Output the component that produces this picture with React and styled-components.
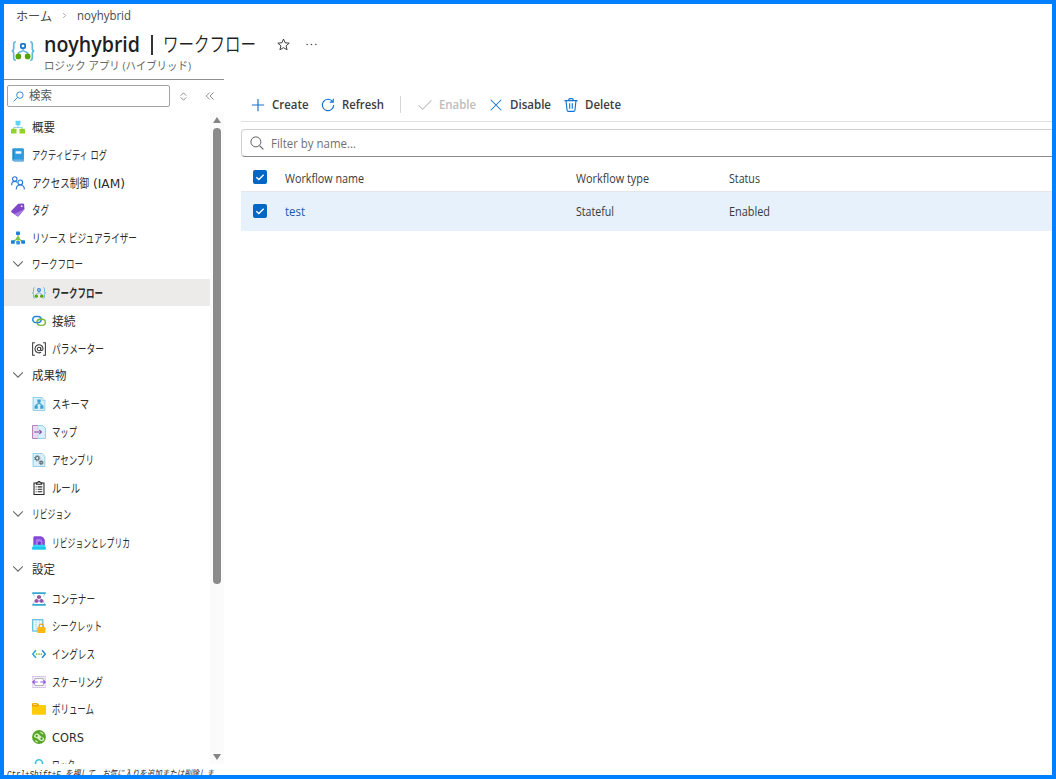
import { useLayoutEffect, useRef } from 'react'
import styled, { createGlobalStyle } from 'styled-components'

const latin = "'Open Sans', 'Noto Sans CJK JP', sans-serif"
const kana = "'DejaVu Sans', 'Noto Sans CJK JP', sans-serif"

const GlobalStyle = createGlobalStyle`
  * { box-sizing: border-box; }
  body { margin: 0; background: #fff; }
`

const Page = styled.div`
  display: flex;
  flex-direction: column;
  width: 1056px;
  height: 779px;
  border: 4px solid #0080ff;
  overflow: hidden;
  background: #fff;
  color: #2c2c2c;
  font-family: ${latin};
  font-size: 12px;
`

const FitBox = styled.span`
  display: inline-block;
  flex: none;
  width: ${({ $w }) => $w}px;
  white-space: nowrap;
`

const FitInner = styled.span`
  display: inline-block;
  transform-origin: 0 50%;
`

// Label condensed or widened to a fixed width
function Fit({ w, children }) {
  const ref = useRef(null)
  useLayoutEffect(() => {
    const fit = () => {
      const el = ref.current
      if (el && el.offsetWidth) {
        el.style.transform = 'none'
        el.style.transform = `scaleX(${w / el.getBoundingClientRect().width})`
      }
    }
    fit()
    document.fonts.ready.then(fit)
  }, [w])
  return <FitBox $w={w}><FitInner ref={ref}>{children}</FitInner></FitBox>
}

const Svg = styled.svg`
  display: block;
  flex: none;
  width: ${({ $s }) => $s || 14}px;
  height: ${({ $s }) => $s || 14}px;
  fill: none;
`

/* ---------- icons ---------- */

const icons = {
  workflow: (
    <>
      <path d="M3.2 1.800C2 1.800 1.800 2.500 1.800 3.600v2.700c0 1-.4 1.600-1.300 1.700.9.1 1.300.7 1.300 1.700v2.700c0 1.100.2 1.800 1.400 1.800M12.800 1.800c1.200 0 1.400.7 1.400 1.800v2.700c0 1 .4 1.600 1.300 1.700-.9.1-1.300.7-1.300 1.700v2.700c0 1.100-.2 1.800-1.400 1.800" stroke="#5cb8dc" strokeWidth="1.100" />
      <path d="M8 5.500v2.300M5 11V9.200L8 7.700l3 1.500V11" stroke="#66b9e0" strokeWidth="1" />
      <rect x="6.600" y="3.200" width="2.800" height="2.900" rx=".6" stroke="#1878d0" strokeWidth="1.200" />
      <circle cx="4.900" cy="11.600" r="1.900" fill="#57a300" />
      <circle cx="11.100" cy="11.600" r="1.900" fill="#57a300" />
    </>
  ),
  overview: (
    <>
      <path d="M8 5v4.500M3 11V8.500h10V11" stroke="#7fc8e8" strokeWidth="1" />
      <rect x="5.300" y=".8" width="5.400" height="5.200" rx=".5" fill="#5fd3f3" />
      <rect x="0" y="10" width="6.300" height="5.500" rx=".5" fill="#92d423" />
      <rect x="9.700" y="10" width="6.300" height="5.500" rx=".5" fill="#92d423" />
    </>
  ),
  log: (
    <>
      <path d="M2 .5h11.500a1 1 0 0 1 1 1v13a1 1 0 0 1-1 1H3.500A2 2 0 0 1 1.500 13.500V1z" fill="#1f88d0" />
      <path d="M2.500 14.300h11v-1h-11z" fill="#b6def7" />
      <path d="M3.500.5h10a1 1 0 0 1 1 1V12.500H3.500z" fill="#2f9be0" />
      <rect x="5.200" y="3.700" width="6.600" height="3" rx=".4" fill="#f2faff" />
    </>
  ),
  iam: (
    <g stroke="#2678d4" strokeWidth="1.300">
      <circle cx="4.300" cy="3.400" r="2.600" />
      <path d="M.7 10.500c0-2.500 1.500-4.300 3.700-4.300 1 0 1.900.4 2.500 1" />
      <circle cx="10.600" cy="7.300" r="2.700" />
      <path d="M6 15.300c0-3 1.900-5 4.600-5s4.700 2 4.700 5" />
    </g>
  ),
  tag: (
    <>
      <path d="M8.200.9 14 .7c.5 0 .8.300.9.800l.6 5.300-6.600 8c-.5.6-1.200.7-1.800.3L.7 10.600c-.6-.5-.7-1.100-.3-1.700z" fill="#8048c8" />
      <path d="m15.500 6.800-6.600 8c-.5.6-1.200.7-1.800.3l-3.600-2.500z" fill="#a77be0" />
      <circle cx="12.200" cy="3.600" r="1.100" fill="#eadcff" />
    </>
  ),
  visualizer: (
    <>
      <path d="M8 4v9M8 6.500c-1 3-3 4.500-5.500 5.500M8 6.500c1 3 3 4.500 5.500 5.500" stroke="#80c342" strokeWidth="1.400" />
      <rect x="5.800" y=".5" width="4.400" height="4.200" rx=".6" fill="#1f7fd6" />
      <circle cx="8" cy="8" r="1.800" fill="#80c342" />
      <rect x="0" y="10.500" width="4.300" height="4.200" rx=".6" fill="#1f7fd6" />
      <rect x="6" y="11.400" width="4.200" height="4.100" rx=".6" fill="#2f95e8" />
      <rect x="11.700" y="10.500" width="4.300" height="4.200" rx=".6" fill="#1f7fd6" />
    </>
  ),
  connection: (
    <>
      <rect x="5.800" y="6" width="9.500" height="7" rx="3.500" stroke="#7dbb3c" strokeWidth="1.600" />
      <rect x=".8" y="2.800" width="9.700" height="7" rx="3.500" stroke="#2586db" strokeWidth="1.600" />
      <path d="M5.900 9.500A3.500 3.500 0 0 1 9.300 6h2.500" stroke="#7dbb3c" strokeWidth="1.600" />
    </>
  ),
  param: (
    <g stroke="#3c3c3c" strokeWidth="1.200">
      <path d="M3.300.8H.7v14.400h2.600M12.700.8h2.600v14.400h-2.600" />
      <circle cx="8" cy="8" r="2" />
      <path d="M10 6v2.500c0 1.900 2.600 1.600 2.600-.7a4.600 4.600 0 1 0-2.300 4" />
    </g>
  ),
  schema: (
    <>
      <path d="M1.200.6h10.300L14.700 3.800v11.600H1.200z" fill="#d9f0fa" stroke="#7cc4e2" strokeWidth=".9" />
      <path d="M11.500.6v3.200h3.200" fill="#fff" stroke="#7cc4e2" strokeWidth=".8" />
      <path d="M8 5v3M4.700 11V9.200L8 7l3.300 2.200V11" stroke="#4aa7d0" strokeWidth="1.500" />
      <path d="M6.100 2.800h3.800v3.400H6.100zM2.900 9.700h3.700v3.600H2.900zM9.400 9.700h3.700v3.600H9.400z" fill="#3f9fce" />
    </>
  ),
  map: (
    <>
      <path d="M6.500.6h5.800L15.400 3.800v11.600H6.500z" fill="#d9f0fa" stroke="#7cc4e2" strokeWidth=".9" />
      <path d="M6.500.6H.6v14.800h5.900" fill="#ead9ee" stroke="#9b65ab" strokeWidth=".9" />
      <path d="M2.500 8h8M8.400 5.600 10.800 8l-2.400 2.400" stroke="#8a4d9e" strokeWidth="1.200" />
    </>
  ),
  assembly: (
    <>
      <path d="M1.200.6h10.300L14.700 3.800v11.600H1.200z" fill="#d9f0fa" stroke="#7cc4e2" strokeWidth=".9" />
      <circle cx="6" cy="6" r="2" stroke="#5b696f" strokeWidth="1.400" />
      <circle cx="6" cy="6" r="3.100" stroke="#5b696f" strokeWidth="1.100" strokeDasharray="1.200 1.200" />
      <circle cx="10.500" cy="11" r="1.400" stroke="#5b696f" strokeWidth="1.300" />
      <circle cx="10.500" cy="11" r="2.400" stroke="#5b696f" strokeWidth="1" strokeDasharray="1 .9" />
    </>
  ),
  rule: (
    <g stroke="#252525" strokeWidth="1.200">
      <path d="M5 2.200H2.300v13.200h11.400V2.200H11" />
      <path d="M5 3.800V1.900h1.700C6.800.9 7.300.5 8 .5s1.200.4 1.300 1.400H11v1.900z" />
      <path d="M4.200 6.700h1M6.500 6.700h5.200M4.200 9.500h1M6.500 9.500h5.200M4.200 12.300h1M6.500 12.300h5.200" />
    </g>
  ),
  revision: (
    <>
      <path d="M1.500 11V2c0-1 .6-1.700 1.600-1.700h6c3.300 0 5.600 2.500 5.600 5.700v5z" fill="#8548d8" />
      <path d="M4.500 11V5c0-1 .6-1.500 1.500-1.500h2.700c2 0 3.300 1.500 3.300 3.300V11z" fill="#a878ec" />
      <path d="M6.800 11V6.500h1.700c1 0 1.600.6 1.600 1.500v3z" fill="#6a35c0" />
      <path d="M1.500 10h13.200l1.100 4c.2.900-.3 1.500-1.200 1.500H1.400c-.9 0-1.400-.6-1.200-1.500z" fill="#35d9f5" />
      <path d="M.6 12.700h14.800l.4 1.300c.2.900-.3 1.500-1.200 1.500H1.400c-.9 0-1.400-.6-1.200-1.500z" fill="#20c4ea" />
    </>
  ),
  container: (
    <>
      <path d="M.3 1.300h15.400M.3 14.700h15.400" stroke="#35a9cf" strokeWidth="1.800" />
      <path d="M1.700 2.200c0 1.700.5 2 1.500 2.500M14.300 2.200c0 1.700-.5 2-1.500 2.500M1.700 13.800c0-1.700.5-2 1.500-2.500M14.300 13.800c0-1.700-.5-2-1.500-2.500" stroke="#6dc3df" strokeWidth="1" />
      <path d="m8 3.300 2.300 1.200V7L8 8.100 5.700 7V4.500zM5.200 7.800l2.300 1.200v2.500l-2.300 1.100-2.300-1.100V9zM10.800 7.800l2.300 1.200v2.500l-2.300 1.100-2.300-1.100V9z" fill="#9457a8" />
    </>
  ),
  secret: (
    <>
      <rect x=".8" y=".8" width="11.600" height="13" fill="#e6f6fc" stroke="#4eb4d8" strokeWidth="1.200" />
      <path d="M4.600 1v12.600M8.500 1v12.600" stroke="#8fd0e6" strokeWidth=".8" strokeDasharray="1.500 .8" />
      <path d="M8.300 10V8.300a2.400 2.400 0 0 1 4.800 0V10" stroke="#f3a90c" strokeWidth="1.400" />
      <rect x="6" y="9.200" width="9.400" height="6.700" rx=".8" fill="#fcb813" />
    </>
  ),
  ingress: (
    <>
      <path d="M4.500 3.700.8 8l3.700 4.300" stroke="#2aa2dd" strokeWidth="1.700" />
      <path d="m11.500 3.700 3.700 4.300-3.700 4.300" stroke="#1e87d6" strokeWidth="1.700" />
      <circle cx="5.300" cy="8" r="1" fill="#78be30" />
      <circle cx="8" cy="8" r="1" fill="#78be30" />
      <circle cx="10.700" cy="8" r="1" fill="#78be30" />
    </>
  ),
  scaling: (
    <>
      <path d="M.5 1.700h15M.5 14.300h15M1 2.500v11M15 2.500v11" stroke="#b795dc" strokeWidth="1" strokeDasharray="1.500 .8" />
      <path d="M3.300 5.500V3.800h9.400v1.700M3.300 10.500v1.700h9.400v-1.700" stroke="#999" strokeWidth="1" />
      <path d="M.8 8h5.700M9.500 8h5.700M3 5.900.9 8 3 10.100M13 5.900 15.100 8 13 10.100" stroke="#9350dc" strokeWidth="1.300" />
    </>
  ),
  volume: (
    <>
      <path d="M0 2.500c0-.6.4-1 1-1h5.500l1.500 2H15c.6 0 1 .4 1 1V13.500c0 .6-.4 1-1 1H1c-.6 0-1-.4-1-1z" fill="#ffca08" />
      <path d="M0 2.500c0-.6.4-1 1-1h5.500l1.500 2L6.500 5H0z" fill="#e9a500" />
      <path d="M1.500 2.800h4" stroke="#fff1bd" strokeWidth=".8" />
    </>
  ),
  cors: (
    <>
      <circle cx="8" cy="8" r="7.900" fill="#5aa62c" />
      <path d="M2.200 7c1-3 3.300-3.500 4.700-2.600 2 1.200 2.200 2.700 4.500 3.500 1.500.5 2.700 1.500 2.700 2.900-.9 1.800-3.300 2.400-4.700 1.400-2-1.200-2.400-2.600-4.400-3.200C3.600 8.600 2.500 8.400 2.200 7z" fill="#d8f0bd" />
      <circle cx="5.300" cy="6.600" r="1.300" fill="#4b9622" />
      <circle cx="10.900" cy="10" r="1.300" fill="#4b9622" />
      <path d="M9.500 2.800c1.500.2 2.600 1 3.300 2M3.800 12c.7.9 1.700 1.400 2.800 1.600" stroke="#c8e8a8" strokeWidth="1.400" />
    </>
  ),
  lock: (
    <>
      <path d="M4 9V6a4 4 0 0 1 8 0v3" stroke="#32c4ea" strokeWidth="1.900" />
      <rect x="2" y="9" width="12" height="7" rx="1" fill="#32c4ea" />
    </>
  ),
  plus: <path d="M8 1v14M1 8h14" stroke="#1172d0" strokeWidth="1.300" />,
  refresh: (
    <path d="M13.300 4.200A6.500 6.500 0 1 0 14.500 8M14 .8v3.900h-4" stroke="#1172d0" strokeWidth="1.300" />
  ),
  check: <path d="m.8 8.500 4.400 4.400L15.300 2.800" stroke="#bdbdbd" strokeWidth="1.200" />,
  cross: <path d="m2 2 12 12M14 2 2 14" stroke="#1172d0" strokeWidth="1.200" />,
  trash: (
    <path d="M.5 3h15M5.500 3V2c0-.8.5-1.300 1.300-1.300h2.400c.8 0 1.300.5 1.300 1.300v1M2.300 3l1.200 11c.1.900.6 1.300 1.400 1.300h6.200c.8 0 1.300-.4 1.400-1.300l1.200-11M6.500 6v6.300M9.500 6v6.300" stroke="#1172d0" strokeWidth="1.300" />
  ),
  search: (
    <>
      <circle cx="6.700" cy="6.700" r="5.700" stroke="#5c5c5c" strokeWidth="1.100" />
      <path d="m10.900 10.900 4.400 4.400" stroke="#5c5c5c" strokeWidth="1.200" />
    </>
  ),
  lookup: (
    <>
      <circle cx="10" cy="6" r="4.700" stroke="#2f86d6" strokeWidth="1.400" />
      <path d="M6.600 9.400.8 15.200" stroke="#2f86d6" strokeWidth="1.400" />
    </>
  ),
  chevron: <path d="m2.500 5 5.500 5.500L13.500 5" stroke="#666" strokeWidth="1.200" />,
  crumb: <path d="m5 2.500 5.500 5.500L5 13.500" stroke="#888" strokeWidth="1.700" />,
  star: (
    <path d="m8 1.300 2 4.600 5 .4-3.800 3.300 1.200 4.900L8 11.900l-4.400 2.600 1.200-4.900L1 6.300l5-.4z" stroke="#3a3a3a" strokeWidth="1.200" />
  ),
  more: (
    <g fill="#555">
      <circle cx="2.700" cy="8" r="1" />
      <circle cx="8" cy="8" r="1" />
      <circle cx="13.300" cy="8" r="1" />
    </g>
  ),
  sort: <path d="M3 6.500 8 1.500l5 5M3 9.500l5 5 5-5" stroke="#777" strokeWidth="1.500" />,
  collapse: <path d="M7.500 2.500 2 8l5.500 5.500M13.500 2.500 8 8l5.500 5.500" stroke="#777" strokeWidth="1.300" />,
  tick: <path d="m3.800 8.200 2.900 2.700 5.500-5.500" stroke="#fff" strokeWidth="1.500" />,
}

function Icon({ name, size }) {
  return <Svg $s={size} viewBox="0 0 16 16">{icons[name]}</Svg>
}

/* ---------- header ---------- */

const Header = styled.header`
  flex: none;
  height: 75px;
`

const Breadcrumb = styled.nav`
  display: flex;
  align-items: center;
  height: 23px;
  padding-left: 12px;
  color: #4a4a4a;
`

const CrumbGap = styled.span`
  display: flex;
  padding: 0 9px;
`

const TitleRow = styled.div`
  display: flex;
  align-items: flex-start;
  height: 52px;
  padding-left: 7px;
`

const Logo = styled.div`
  margin: 12px 9px 0 0;
`

const Titles = styled.div`
  display: flex;
  flex-direction: column;
`

const Title = styled.h1`
  display: flex;
  align-items: center;
  height: 34px;
  margin: 0;
  color: #1f1f1f;
  font-size: 21px;
  font-weight: 600;
  line-height: 34px;
`

const Bar = styled.span`
  width: 1.5px;
  height: 20px;
  margin: 1px 10.5px 0 11px;
  background: #333;
`

const TitleThin = styled.span`
  margin-bottom: -1px;
  font-weight: 350;
  font-size: 20px;
`

const Subtitle = styled.div`
  height: 16px;
  margin-top: -3px;
  color: #666;
  font-size: 11px;
  line-height: 16px;
`

const TitleActions = styled.div`
  display: flex;
  align-items: center;
  gap: 15px;
  height: 35px;
  margin-left: 20.5px;
`

/* ---------- sidebar ---------- */

const Body = styled.div`
  display: flex;
  flex: 1;
  min-height: 0;
`

const Sidebar = styled.aside`
  display: flex;
  flex-direction: column;
  width: 220px;
  border-top: 1px solid #8f8f8f;
  font-family: ${kana};
`

const SearchRow = styled.div`
  display: flex;
  align-items: center;
  height: 33px;
  padding-left: 3px;
`

const SearchBox = styled.div`
  display: flex;
  align-items: center;
  gap: 5px;
  width: 163px;
  height: 22px;
  padding-left: 5px;
  border: 1px solid #a3a3a3;
  border-radius: 2px;
  color: #555;
  line-height: 16px;
`

const SearchTools = styled.div`
  display: flex;
  gap: 17px;
  align-items: center;
  margin-left: 9px;
`

const Scroller = styled.div`
  display: flex;
  flex: none;
  height: 652px;
  overflow: hidden;
`

const Menu = styled.ul`
  width: 206px;
  margin: 0;
  padding: 0;
  list-style: none;
`

const Item = styled.li`
  display: flex;
  align-items: center;
  gap: 6.5px;
  height: 27.74px;
  padding-top: ${({ $level }) => ($level === 'group' ? 0 : 2)}px;
  padding-left: ${({ $level }) => ($level === 'child' ? 27.5 : 7)}px;
  padding-bottom: ${({ $level }) => ($level === 'group' ? 1 : 0)}px;
  background: ${({ $active }) => ($active ? '#ecebea' : 'transparent')};
  font-weight: ${({ $active }) => ($active ? 700 : 400)};
  line-height: 20px;
`

const ItemLabel = styled.span`
  display: flex;
  gap: 4px;
  padding-top: 2px;
`

const Track = styled.div`
  display: flex;
  flex-direction: column;
  align-items: center;
  justify-content: space-between;
  width: 14px;
  padding: 5px 0 4px;
  background: #fbfbfb;
`

const Arrow = styled.i`
  width: 0;
  height: 0;
  border: 4px solid transparent;
  border-width: ${({ $up }) => ($up ? '0 4px 6px' : '6px 4px 0')};
  border-top-color: #858585;
  border-bottom-color: #858585;
`

const Thumb = styled.div`
  width: 8px;
  height: 456px;
  margin: 5px 0 auto;
  border-radius: 4px;
  background: #8b8b8b;
`

const Hint = styled.div`
  height: 11px;
  padding: 3.5px 0 0 2.5px;
  overflow: hidden;
  font-family: 'Liberation Mono', 'Noto Sans CJK JP', monospace;
  font-size: 9.5px;
  font-style: italic;
  line-height: 14px;
`

/* ---------- main ---------- */

const Main = styled.main`
  flex: 1;
  margin-left: 16.7px;
`

const Toolbar = styled.div`
  display: flex;
  align-items: center;
  gap: 12.8px;
  height: 43px;
  padding: 9px 0 0 10.5px;
  border-bottom: 1px solid #e0e0e0;
`

const Command = styled.span`
  display: flex;
  align-items: center;
  gap: 7px;
  color: ${({ $off }) => ($off ? '#bdbdbd' : '#3c3c3c')};
  font-weight: 600;
`

const Divider = styled.i`
  width: 1px;
  height: 17px;
  margin: 0 4px 0 3px;
  background: #d6d6d6;
`

const Filter = styled.div`
  display: flex;
  align-items: center;
  gap: 7px;
  height: 28px;
  margin-top: 7px;
  padding-left: 8px;
  border: 1px solid #d1d1d1;
  border-right: 0;
  border-bottom-color: #8a8a8a;
  border-radius: 4px 0 0 4px;
  color: #707070;
`

const Row = styled.div`
  display: grid;
  grid-template-columns: 32.7px 291px 152.5px 1fr;
  align-items: center;
  height: ${({ $head }) => ($head ? 35 : 39)}px;
  padding: ${({ $head }) => ($head ? '8px 0 0 12px' : '0 0 0 12px')};
  border-bottom: ${({ $head }) => ($head ? '1px solid #e3e6ea' : 'none')};
  background: ${({ $head }) => ($head ? '#fff' : '#e6f1fb')};
  color: #3a3a3a;
`

const Checkbox = styled.span`
  display: flex;
  align-items: center;
  justify-content: center;
  width: 14px;
  height: 14px;
  margin-bottom: 2px;
  border-radius: 2px;
  background: #0067c5;
`

const Link = styled.span`
  color: #145dab;
`

// [level, icon, [text, width] parts, active]
const menu = [
  ['top', 'overview', [['概要', 23]]],
  ['top', 'log', [['アクティビティ ログ', 75]]],
  ['top', 'iam', [['アクセス制御', 57], ['(IAM)', 32]]],
  ['top', 'tag', [['タグ', 17]]],
  ['top', 'visualizer', [['リソース ビジュアライザー', 105]]],
  ['group', 'chevron', [['ワークフロー', 51]]],
  ['child', 'workflow', [['ワークフロー', 51]], true],
  ['child', 'connection', [['接続', 23.5]]],
  ['child', 'param', [['パラメーター', 52]]],
  ['group', 'chevron', [['成果物', 34.5]]],
  ['child', 'schema', [['スキーマ', 37]]],
  ['child', 'map', [['マップ', 25]]],
  ['child', 'assembly', [['アセンブリ', 42]]],
  ['child', 'rule', [['ルール', 28]]],
  ['group', 'chevron', [['リビジョン', 39]]],
  ['child', 'revision', [['リビジョンとレプリカ', 78]]],
  ['group', 'chevron', [['設定', 23]]],
  ['child', 'container', [['コンテナー', 43]]],
  ['child', 'secret', [['シークレット', 50]]],
  ['child', 'ingress', [['イングレス', 43]]],
  ['child', 'scaling', [['スケーリング', 51]]],
  ['child', 'volume', [['ボリューム', 42]]],
  ['child', 'cors', [['CORS', 32]]],
  ['child', 'lock', [['ロック', 23]]],
]

function App() {
  return (
    <Page>
      <GlobalStyle />
      <Header>
        <Breadcrumb>
          <Fit w={36}>ホーム</Fit>
          <CrumbGap><Icon name="crumb" size={7} /></CrumbGap>
          <Fit w={54}>noyhybrid</Fit>
        </Breadcrumb>
        <TitleRow>
          <Logo><Icon name="workflow" size={24} /></Logo>
          <Titles>
            <Title>
              <Fit w={96}>noyhybrid</Fit>
              <Bar />
              <TitleThin><Fit w={93}>ワークフロー</Fit></TitleThin>
            </Title>
            <Subtitle><Fit w={147}>ロジック アプリ (ハイブリッド)</Fit></Subtitle>
          </Titles>
          <TitleActions>
            <Icon name="star" size={13} />
            <Icon name="more" size={13} />
          </TitleActions>
        </TitleRow>
      </Header>
      <Body>
        <Sidebar>
          <SearchRow>
            <SearchBox>
              <Icon name="lookup" size={11} />
              <Fit w={23}>検索</Fit>
            </SearchBox>
            <SearchTools>
              <Icon name="sort" size={9} />
              <Icon name="collapse" size={10} />
            </SearchTools>
          </SearchRow>
          <Scroller>
            <Menu>
              {menu.map(([level, icon, parts, active]) => (
                <Item key={icon + parts[0][0]} $level={level} $active={active}>
                  <Icon name={icon} />
                  <ItemLabel>
                    {parts.map(([text, width]) => <Fit key={text} w={width}>{text}</Fit>)}
                  </ItemLabel>
                </Item>
              ))}
            </Menu>
            <Track>
              <Arrow $up />
              <Thumb />
              <Arrow />
            </Track>
          </Scroller>
          <Hint><Fit w={207}>Ctrl+Shift+F を押して、お気に入りを追加または削除しま</Fit></Hint>
        </Sidebar>
        <Main>
          <Toolbar>
            <Command><Icon name="plus" /><Fit w={36.5}>Create</Fit></Command>
            <Command><Icon name="refresh" /><Fit w={42}>Refresh</Fit></Command>
            <Divider />
            <Command $off><Icon name="check" /><Fit w={37}>Enable</Fit></Command>
            <Command><Icon name="cross" /><Fit w={41}>Disable</Fit></Command>
            <Command><Icon name="trash" /><Fit w={36}>Delete</Fit></Command>
          </Toolbar>
          <Filter>
            <Icon name="search" />
            <Fit w={85}>Filter by name...</Fit>
          </Filter>
          <Row $head>
            <Checkbox><Icon name="tick" /></Checkbox>
            <Fit w={79}>Workflow name</Fit>
            <Fit w={73}>Workflow type</Fit>
            <Fit w={31}>Status</Fit>
          </Row>
          <Row>
            <Checkbox><Icon name="tick" /></Checkbox>
            <Link><Fit w={20}>test</Fit></Link>
            <Fit w={38}>Stateful</Fit>
            <Fit w={41}>Enabled</Fit>
          </Row>
        </Main>
      </Body>
    </Page>
  )
}

export default App
